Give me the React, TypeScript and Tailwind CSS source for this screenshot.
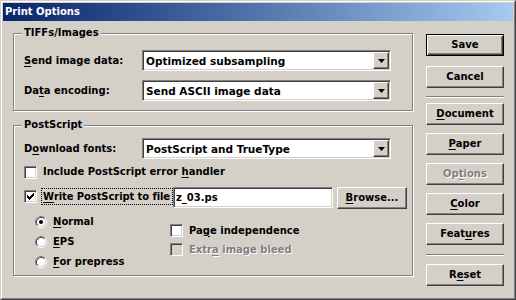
import React from 'react';

const U: React.FC<{ children: React.ReactNode }> = ({ children }) => (
  <span className="underline underline-offset-[2px]">{children}</span>
);

const sunken =
  'border border-t-[#808080] border-l-[#808080] border-r-white border-b-white shadow-[inset_1px_1px_0_#404040,inset_-1px_-1px_0_#d4d0c8]';

const raised =
  'border border-t-white border-l-white border-r-[#404040] border-b-[#404040] shadow-[inset_-1px_-1px_0_#808080]';

interface ButtonProps {
  children: React.ReactNode;
  isDefault?: boolean;
  disabled?: boolean;
  className?: string;
}

const Button: React.FC<ButtonProps> = ({ children, isDefault, disabled, className = '' }) => (
  <button
    type="button"
    className={`flex h-[22px] items-center justify-center bg-[#d4d0c8] leading-[12px] ${
      isDefault
        ? 'border border-black shadow-[inset_1px_1px_0_#fff,inset_-1px_-1px_0_#404040,inset_-2px_-2px_0_#808080]'
        : raised
    } ${disabled ? 'text-[#808080] [text-shadow:1px_1px_0_#fff]' : 'text-black'} ${className}`}
  >
    {children}
  </button>
);

const Select: React.FC<{ value: string }> = ({ value }) => (
  <div className={`flex h-[21px] w-[249px] bg-white p-[1px] ${sunken}`}>
    <span className="flex flex-1 items-center pl-[2px] text-[10.5px] leading-[12px]">{value}</span>
    <span className={`flex h-[17px] w-[16px] items-center justify-center bg-[#d4d0c8] ${raised}`}>
      <svg width="7" height="4" viewBox="0 0 7 4">
        <path d="M0 0h7L3.5 4z" fill="#000" />
      </svg>
    </span>
  </div>
);

const CheckBox: React.FC<{ checked?: boolean; disabled?: boolean }> = ({ checked, disabled }) => (
  <span className={`flex h-[13px] w-[13px] shrink-0 ${disabled ? 'bg-[#d4d0c8]' : 'bg-white'} ${sunken}`}>
    {checked && (
      <svg width="7" height="7" viewBox="0 0 7 7" className="ml-[2px] mt-[2px]" shapeRendering="crispEdges">
        <rect x="6" y="0" width="1" height="1" />
        <rect x="5" y="1" width="2" height="1" />
        <rect x="0" y="2" width="1" height="1" />
        <rect x="4" y="2" width="3" height="1" />
        <rect x="0" y="3" width="2" height="1" />
        <rect x="3" y="3" width="3" height="1" />
        <rect x="0" y="4" width="5" height="1" />
        <rect x="1" y="5" width="3" height="1" />
        <rect x="2" y="6" width="1" height="1" />
      </svg>
    )}
  </span>
);

const Radio: React.FC<{ checked?: boolean }> = ({ checked }) => (
  <svg width="12" height="12" viewBox="0 0 12 12" className="shrink-0">
    <circle cx="6" cy="6" r="4.5" fill="#fff" />
    <path d="M2.11 9.89A5.5 5.5 0 0 1 9.89 2.11" stroke="#808080" fill="none" />
    <path d="M9.89 2.11A5.5 5.5 0 0 1 2.11 9.89" stroke="#fff" fill="none" />
    <path d="M2.82 9.18A4.5 4.5 0 0 1 9.18 2.82" stroke="#404040" fill="none" />
    <path d="M9.18 2.82A4.5 4.5 0 0 1 2.82 9.18" stroke="#d4d0c8" fill="none" />
    {checked && <circle cx="6" cy="6" r="2" fill="#000" />}
  </svg>
);

const GroupBox: React.FC<{ title: string; className?: string; children: React.ReactNode }> = ({
  title,
  className = '',
  children,
}) => (
  <div
    className={`flex w-[400px] flex-col border border-[#808080] shadow-[inset_1px_1px_0_#fff,1px_1px_0_#fff] ${className}`}
  >
    <span className="-mt-[7px] ml-[8px] h-[12px] w-fit bg-[#d4d0c8] px-[2px] leading-[12px]">{title}</span>
    {children}
  </div>
);

const Separator: React.FC<{ className?: string }> = ({ className = '' }) => (
  <div className={`h-[2px] border-t border-b border-t-[#808080] border-b-white ${className}`} />
);

export default function App() {
  return (
    <div className="h-[300px] w-[516px] whitespace-nowrap border border-t-[#d4d0c8] border-l-[#d4d0c8] border-r-[#404040] border-b-[#404040] bg-[#d4d0c8] font-['DejaVu_Sans',sans-serif] text-[10px] font-bold text-black">
      <div className="h-full border border-t-white border-l-white border-r-[#808080] border-b-[#808080] p-[1px]">
        <div className="flex h-[18px] items-center bg-linear-to-r from-[#0a246a] to-[#a6caf0] pl-[2px] leading-[12px] text-white">
          Print Options
        </div>

        <div className="flex">
          <div className="flex flex-col pl-[10px]">
            <GroupBox title="TIFFs/Images" className="mt-[12px] h-[78px]">
              <div className="mt-[11px] flex h-[21px] items-center pl-[10px]">
                <span className="w-[118px] leading-[12px]">
                  <U>S</U>end image data:
                </span>
                <Select value="Optimized subsampling" />
              </div>
              <div className="mt-[9px] flex h-[21px] items-center pl-[10px]">
                <span className="w-[118px] leading-[12px]">
                  Da<U>t</U>a encoding:
                </span>
                <Select value="Send ASCII image data" />
              </div>
            </GroupBox>

            <GroupBox title="PostScript" className="mt-[14px] h-[151px]">
              <div className="mt-[7px] flex h-[21px] items-center pl-[10px]">
                <span className="w-[118px] leading-[12px]">
                  D<U>o</U>wnload fonts:
                </span>
                <Select value="PostScript and TrueType" />
              </div>

              <div className="mt-[5px] flex h-[16px] items-center gap-[6px] pl-[10px]">
                <CheckBox />
                <span className="leading-[12px]">
                  Include PostScript error <U>h</U>andler
                </span>
              </div>

              <div className="mt-[7px] flex h-[22px] items-start pl-[10px]">
                <div className="flex h-[19px] items-center">
                  <CheckBox checked />
                  <span className="ml-[4px] flex h-[17px] w-[132px] items-center overflow-hidden border border-dotted border-black pl-[1px] leading-[12px] tracking-[-0.1px]">
                    <U>W</U>rite PostScript to file
                  </span>
                </div>
                <div className={`flex h-[21px] w-[160px] items-center bg-white pl-[2px] leading-[12px] ${sunken}`}>
                  z_03.ps
                </div>
                <Button className="ml-[4px] w-[70px]">
                  <U>B</U>rowse...
                </Button>
              </div>

              <div className="mt-[3px] flex pl-[10px]">
                <div className="flex w-[146px] flex-col pl-[11px]">
                  <div className="flex h-[20px] items-center gap-[6px]">
                    <Radio checked />
                    <span className="leading-[12px]">
                      <U>N</U>ormal
                    </span>
                  </div>
                  <div className="flex h-[20px] items-center gap-[6px]">
                    <Radio />
                    <span className="leading-[12px]">
                      <U>E</U>PS
                    </span>
                  </div>
                  <div className="flex h-[20px] items-center gap-[6px]">
                    <Radio />
                    <span className="leading-[12px]">
                      <U>F</U>or prepress
                    </span>
                  </div>
                </div>
                <div className="mt-[9px] flex flex-col">
                  <div className="flex h-[19px] items-center gap-[6px]">
                    <CheckBox />
                    <span className="leading-[12px]">
                      Pa<U>g</U>e independence
                    </span>
                  </div>
                  <div className="flex h-[19px] items-center gap-[6px]">
                    <CheckBox disabled />
                    <span className="leading-[12px] text-[#808080] [text-shadow:1px_1px_0_#fff]">
                      Extr<U>a</U> image bleed
                    </span>
                  </div>
                </div>
              </div>
            </GroupBox>
          </div>

          <div className="ml-[13px] flex w-[78px] flex-col">
            <Button isDefault className="mt-[13px]">
              Save
            </Button>
            <Button className="mt-[10px]">Cancel</Button>
            <Separator className="mt-[8px]" />
            <Button className="mt-[5px]">
              <U>D</U>ocument
            </Button>
            <Button className="mt-[8px]">
              <U>P</U>aper
            </Button>
            <Button disabled className="mt-[8px]">
              Op<U>t</U>ions
            </Button>
            <Button className="mt-[8px]">
              <U>C</U>olor
            </Button>
            <Button className="mt-[8px]">
              Feat<U>u</U>res
            </Button>
            <Separator className="mt-[9px]" />
            <Button className="mt-[8px]">
              R<U>e</U>set
            </Button>
          </div>
        </div>
      </div>
    </div>
  );
}
